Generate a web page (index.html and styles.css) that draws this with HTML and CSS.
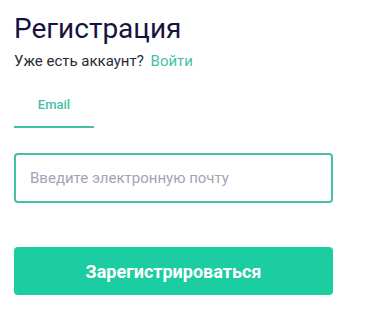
FILE: index.html
```html
<!DOCTYPE html>
<html lang="ru">
<head>
    <meta charset="UTF-8">
    <meta name="viewport" content="width=device-width, initial-scale=1.0">
    <title>Регистрация</title>
    <link rel="stylesheet" href="styles.css">
</head>
<body>
    <div class="register">
        <h1 class="title">Регистрация</h1>
        <p class="subtitle">Уже есть аккаунт? <a href="#" class="link">Войти</a></p>

        <div class="tabs">
            <div class="tab active">Email</div>
        </div>

        <form class="form">
            <input type="email" class="input" placeholder="Введите электронную почту">
            <button type="button" class="btn">Зарегистрироваться</button>
        </form>
    </div>
</body>
</html>
```

FILE: styles.css
```css
:root {
    --primary: #1ccda2;
    --accent: #45bfa6;
    --title: #15143f;
    --text: #2a2a35;
    --placeholder: #a3a3b3;
}

* {
    margin: 0;
    padding: 0;
    box-sizing: border-box;
    font-family: Roboto, 'Noto Sans', sans-serif;
}

body {
    background: #ffffff;
    color: var(--text);
}

.register {
    width: 319px;
    margin-left: 14px;
    padding-top: 12px;
}

.title {
    color: var(--title);
    font-size: 28px;
    font-weight: 400;
    line-height: 34px;
}

.subtitle {
    font-size: 15px;
    line-height: 18px;
    margin-top: 6px;
}

.link {
    color: var(--accent);
    text-decoration: none;
    margin-left: 3px;
}

.tabs {
    display: flex;
    margin-top: 21px;
}

.tab {
    width: 80px;
    text-align: center;
    font-size: 13px;
    font-weight: 500;
    line-height: 15px;
    color: var(--accent);
    padding: 6px 0 14px;
    border-bottom: 2px solid var(--accent);
}

.form {
    display: flex;
    flex-direction: column;
    margin-top: 25px;
}

.input {
    height: 50px;
    border: 2px solid var(--accent);
    border-radius: 4px;
    padding: 0 14px;
    font-size: 15px;
    color: var(--text);
    outline: none;
}

.input::placeholder {
    color: var(--placeholder);
}

.btn {
    margin-top: 44px;
    height: 48px;
    border: none;
    border-radius: 4px;
    background: var(--primary);
    color: #ffffff;
    font-size: 18px;
    font-weight: 700;
    cursor: pointer;
}
```
